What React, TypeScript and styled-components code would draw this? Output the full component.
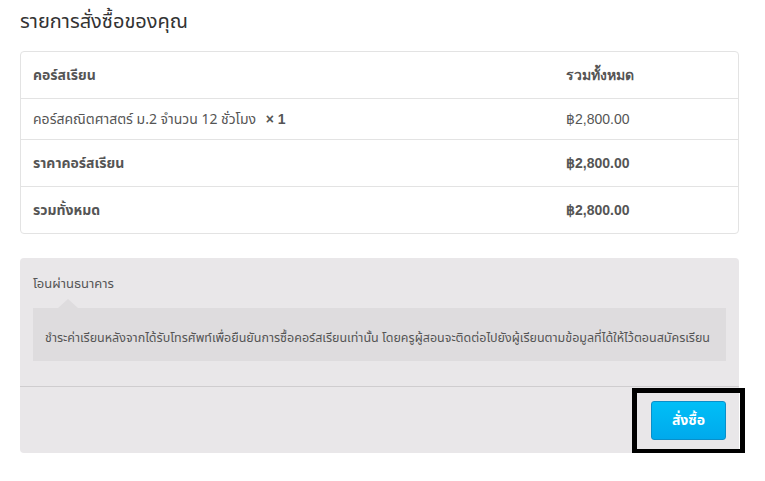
import React from "react";
import styled, { createGlobalStyle } from "styled-components";

const GlobalStyle = createGlobalStyle`
  body {
    margin: 0;
    background: #fff;
    font-family: Tahoma, "Noto Sans Thai", "Noto Sans", "DejaVu Sans", sans-serif;
    color: #555;
  }
`;

const Page = styled.div`
  padding: 10px 26px 0 20px;
  width: 719px;
`;

const Title = styled.h2`
  margin: 0 0 17px;
  font-size: 20px;
  font-weight: normal;
  line-height: 24px;
  color: #333;
`;

const Table = styled.div`
  border: 1px solid #e3e3e3;
  border-radius: 4px;
  overflow: hidden;
`;

const Row = styled.div<{ $h: number }>`
  display: flex;
  align-items: center;
  height: ${p => p.$h}px;
  font-size: 14px;
  & + & {
    border-top: 1px solid #e3e3e3;
  }
`;

const Cell = styled.div<{ $bold?: boolean }>`
  flex: 1;
  padding-left: 12px;
  font-weight: ${p => (p.$bold ? "bold" : "normal")};
`;

const Amount = styled.div<{ $bold?: boolean }>`
  width: 172px;
  font-family: Arial, "Liberation Sans", sans-serif;
  font-weight: ${p => (p.$bold ? "bold" : "normal")};
`;

const Qty = styled.strong`
  margin-left: 6px;
  font-family: Arial, "Liberation Sans", sans-serif;
`;

const Payment = styled.div`
  margin-top: 24px;
  background: #e9e7e9;
  border-radius: 4px;
`;

const Method = styled.div`
  padding: 19px 13px 0;
  font-size: 13px;
  line-height: 15px;
`;

const Note = styled.div`
  position: relative;
  margin: 16px 13px 25px;
  padding: 8px 12px 0;
  height: 53px;
  display: flex;
  align-items: center;
  box-sizing: border-box;
  background: #dedcde;
  font-size: 12.5px;
  white-space: nowrap;

  &::before {
    content: "";
    position: absolute;
    left: 25px;
    top: -9px;
    border-left: 10px solid transparent;
    border-right: 10px solid transparent;
    border-bottom: 9px solid #dedcde;
  }
`;

const Footer = styled.div`
  border-top: 1px solid #cfcdcf;
  display: flex;
  justify-content: flex-end;
  padding: 14px 13px 13px;
`;

const OrderButton = styled.button`
  position: relative;
  width: 75px;
  height: 39px;
  border: 1px solid #0a8fc9;
  border-radius: 3px;
  background: linear-gradient(#00bff7, #00a9ec);
  color: #fff;
  font-family: inherit;
  font-size: 14px;
  font-weight: bold;
  cursor: pointer;

  &::after {
    content: "";
    position: absolute;
    top: -14px;
    bottom: -15px;
    left: -20px;
    right: -20px;
    border: 5px solid #000;
    pointer-events: none;
  }
`;

export default function App() {
  return (
    <Page>
      <GlobalStyle />
      <Title>รายการสั่งซื้อของคุณ</Title>
      <Table>
        <Row $h={46}>
          <Cell $bold>คอร์สเรียน</Cell>
          <Amount $bold>รวมทั้งหมด</Amount>
        </Row>
        <Row $h={40}>
          <Cell>
            คอร์สคณิตศาสตร์ ม.2 จำนวน 12 ชั่วโมง <Qty>× 1</Qty>
          </Cell>
          <Amount>฿2,800.00</Amount>
        </Row>
        <Row $h={46}>
          <Cell $bold>ราคาคอร์สเรียน</Cell>
          <Amount $bold>฿2,800.00</Amount>
        </Row>
        <Row $h={46}>
          <Cell $bold>รวมทั้งหมด</Cell>
          <Amount $bold>฿2,800.00</Amount>
        </Row>
      </Table>
      <Payment>
        <Method>โอนผ่านธนาคาร</Method>
        <Note>
          ชำระค่าเรียนหลังจากได้รับโทรศัพท์เพื่อยืนยันการซื้อคอร์สเรียนเท่านั้น โดยครูผู้สอนจะติดต่อไปยังผู้เรียนตามข้อมูลที่ได้ให้ไว้ตอนสมัครเรียน
        </Note>
        <Footer>
          <OrderButton>สั่งซื้อ</OrderButton>
        </Footer>
      </Payment>
    </Page>
  );
}
